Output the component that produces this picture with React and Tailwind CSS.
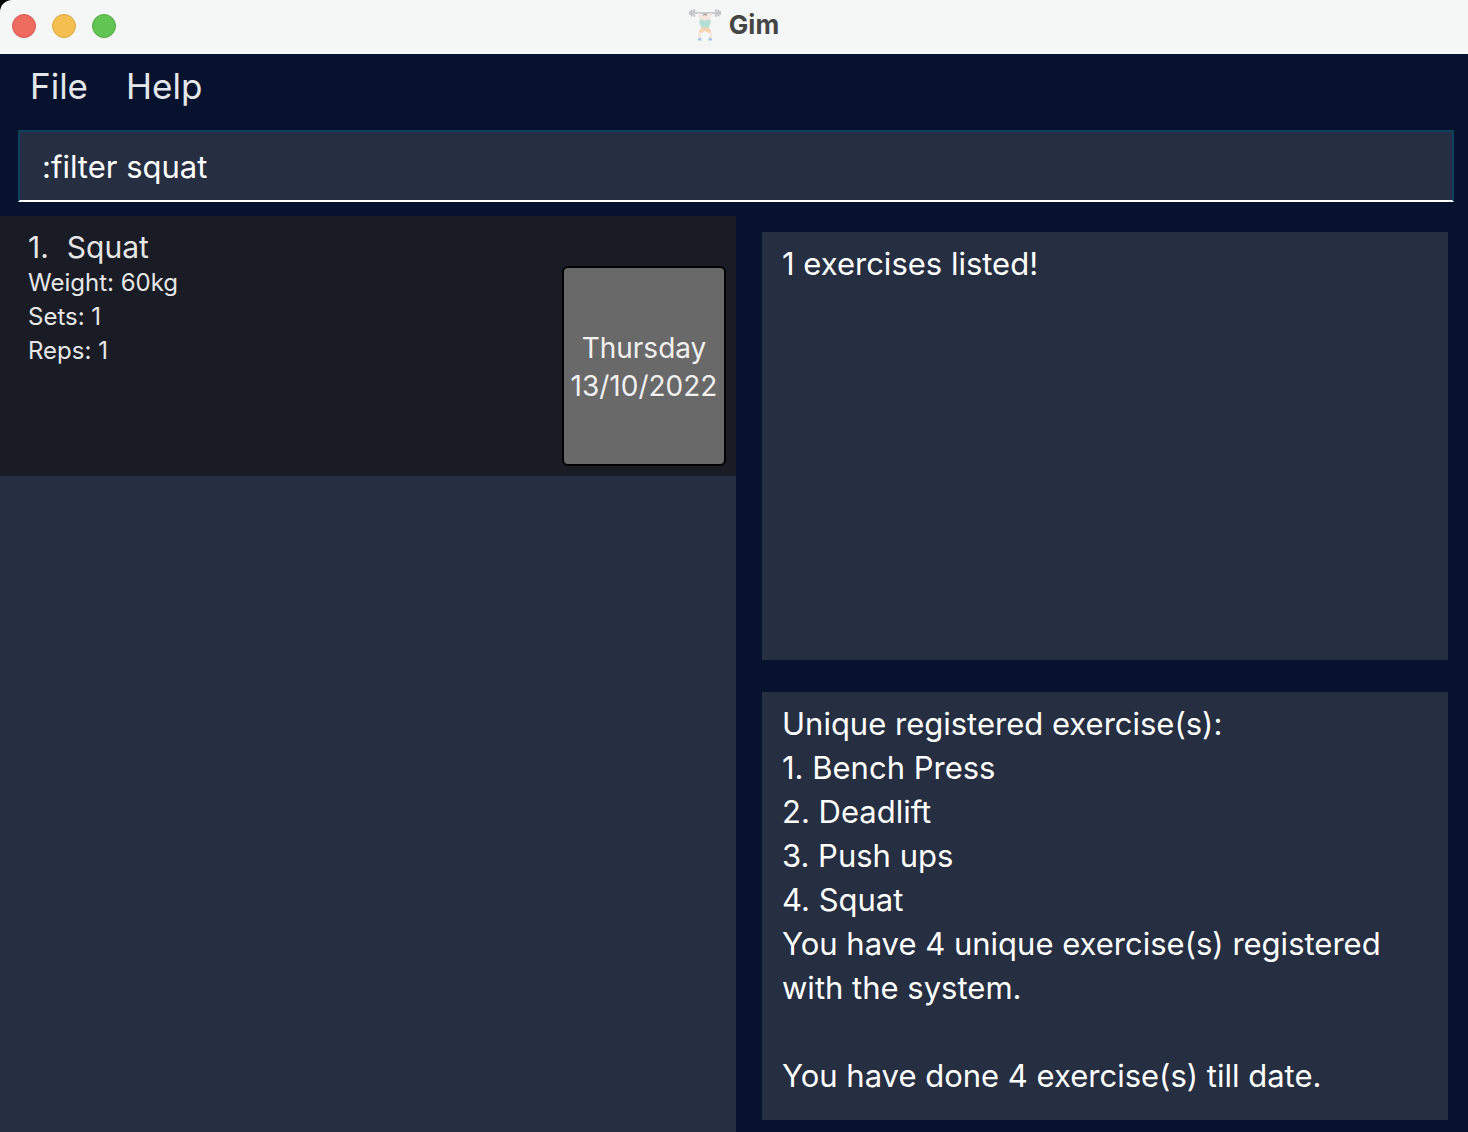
const exercises = [
  { id: 1, name: "Squat", weight: "60kg", sets: 1, reps: 1, day: "Thursday", date: "13/10/2022" },
];

const summary = `Unique registered exercise(s):
1. Bench Press
2. Deadlift
3. Push ups
4. Squat
You have 4 unique exercise(s) registered with the system.

You have done 4 exercise(s) till date.`;

function WeightLifter() {
  return (
    <svg viewBox="0 0 32 32" className="size-8" aria-hidden="true">
      <path d="M2 4H30" stroke="#b9bcbe" strokeWidth="1.4" />
      <g fill="#bcbec0">
        <rect x="0" y="2" width="1.6" height="4" rx="0.8" />
        <rect x="1.6" y="0.8" width="2" height="6.6" rx="1" />
        <rect x="4" y="0" width="2.2" height="8" rx="1" fill="#c9cbcd" />
        <rect x="25.8" y="0" width="2.2" height="8" rx="1" fill="#c9cbcd" />
        <rect x="28.4" y="0.8" width="2" height="6.6" rx="1" />
        <rect x="30.4" y="2" width="1.6" height="4" rx="0.8" />
      </g>
      <path d="M10.5 5 11 8l3 4M21.5 5 21 8l-3 4" fill="none" stroke="#f3e3d8" strokeWidth="2" strokeLinecap="round" />
      <path d="M12.4 22 10 25l.8 4.5M19.6 22l2.4 3-.8 4.5" fill="none" stroke="#f3e3d8" strokeWidth="2.2" />
      <path d="M11 10.5 16 11.5l5-1 .9 2-2.2 6.500h-7.400L10.100 12.500Z" fill="#b4dfd3" />
      <path d="M12.400 18.500h7.200l2.700 4-3.300 1.800-3-2.800-3 2.800-3.300-1.800Z" fill="#f8d3b1" />
      <ellipse cx="16" cy="8" rx="2.700" ry="3.300" fill="#f3e3d8" />
      <path d="M13.200 7.400c-.3-3.600 5.900-3.600 5.600 0l-.8-1.200h-4Z" fill="#9d9a98" />
      <path d="M8.800 31.500c-.2-1.800.8-2.700 3.200-2.700l.7 2.700ZM23.200 31.500c.2-1.800-.8-2.700-3.200-2.700l-.7 2.700Z" fill="#a9bfe6" />
    </svg>
  );
}

function TitleBar() {
  return (
    <header className="grid h-[54px] grid-cols-[1fr_auto_1fr] items-center rounded-tl-xl bg-[#f5f6f6] px-3">
      <div className="flex gap-4 pb-0.5">
        <button aria-label="Close" className="size-6 rounded-full border border-[#d9584d] bg-[#ed6b5f]" />
        <button aria-label="Minimize" className="size-6 rounded-full border border-[#dca843] bg-[#f5bf4f]" />
        <button aria-label="Zoom" className="size-6 rounded-full border border-[#51a940] bg-[#61c554]" />
      </div>
      <h1 className="flex items-center gap-2 pb-1 text-[26px] leading-8 font-bold text-[#444545]">
        <WeightLifter />
        Gim
      </h1>
    </header>
  );
}

function ExerciseCard({ exercise }) {
  return (
    <li className="flex h-[260px] justify-between bg-[#191c25] pr-[10px] pb-[10px] pl-7 text-[#e6e6e7]">
      <div className="pt-3">
        <h2 className="flex gap-[18px] text-[30px] leading-[38px]">
          <span>{exercise.id}.</span>
          <span>{exercise.name}</span>
        </h2>
        <div className="text-[24px] leading-[34px]">
          <p>Weight: {exercise.weight}</p>
          <p>Sets: {exercise.sets}</p>
          <p>Reps: {exercise.reps}</p>
        </div>
      </div>
      <div className="flex h-[200px] w-[164px] flex-col justify-center self-end rounded-md border-2 border-black bg-[#696969] pt-0.5 text-center text-[28px] leading-[38px] text-[#f0f0f0]">
        <p>{exercise.day}</p>
        <p>{exercise.date}</p>
      </div>
    </li>
  );
}

function OutputPanel({ label, text }) {
  return (
    <textarea
      readOnly
      aria-label={label}
      value={text}
      className="min-h-0 w-full flex-1 resize-none overflow-hidden bg-[#262e41] px-5 py-[10px] text-[31px] leading-[44px] text-white outline-none"
    />
  );
}

export default function App() {
  return (
    <div className="flex h-screen flex-col bg-[#07122e] font-[Inter,sans-serif]">
      <div className="bg-black">
        <TitleBar />
      </div>
      <nav className="flex h-16 items-center gap-[38px] px-[30px] text-[35px] leading-[44px] text-[#e6e7ea]">
        <button>File</button>
        <button>Help</button>
      </nav>
      <div className="flex pt-3 pr-[14px] pb-[14px] pl-[18px]">
        <input
          aria-label="Command"
          defaultValue=":filter squat"
          className="h-[72px] w-full border-2 border-[#0e3f5e] border-b-white bg-[#262e41] px-[22px] text-[31px] leading-[44px] text-white outline-none"
        />
      </div>
      <main className="grid min-h-0 flex-1 grid-cols-[736fr_732fr]">
        <ul className="bg-[#262e41]">
          {exercises.map((exercise) => (
            <ExerciseCard key={exercise.id} exercise={exercise} />
          ))}
        </ul>
        <div className="flex min-h-0 flex-col gap-8 pt-4 pr-5 pb-3 pl-[26px]">
          <OutputPanel label="Result" text="1 exercises listed!" />
          <OutputPanel label="Exercise summary" text={summary} />
        </div>
      </main>
    </div>
  );
}
